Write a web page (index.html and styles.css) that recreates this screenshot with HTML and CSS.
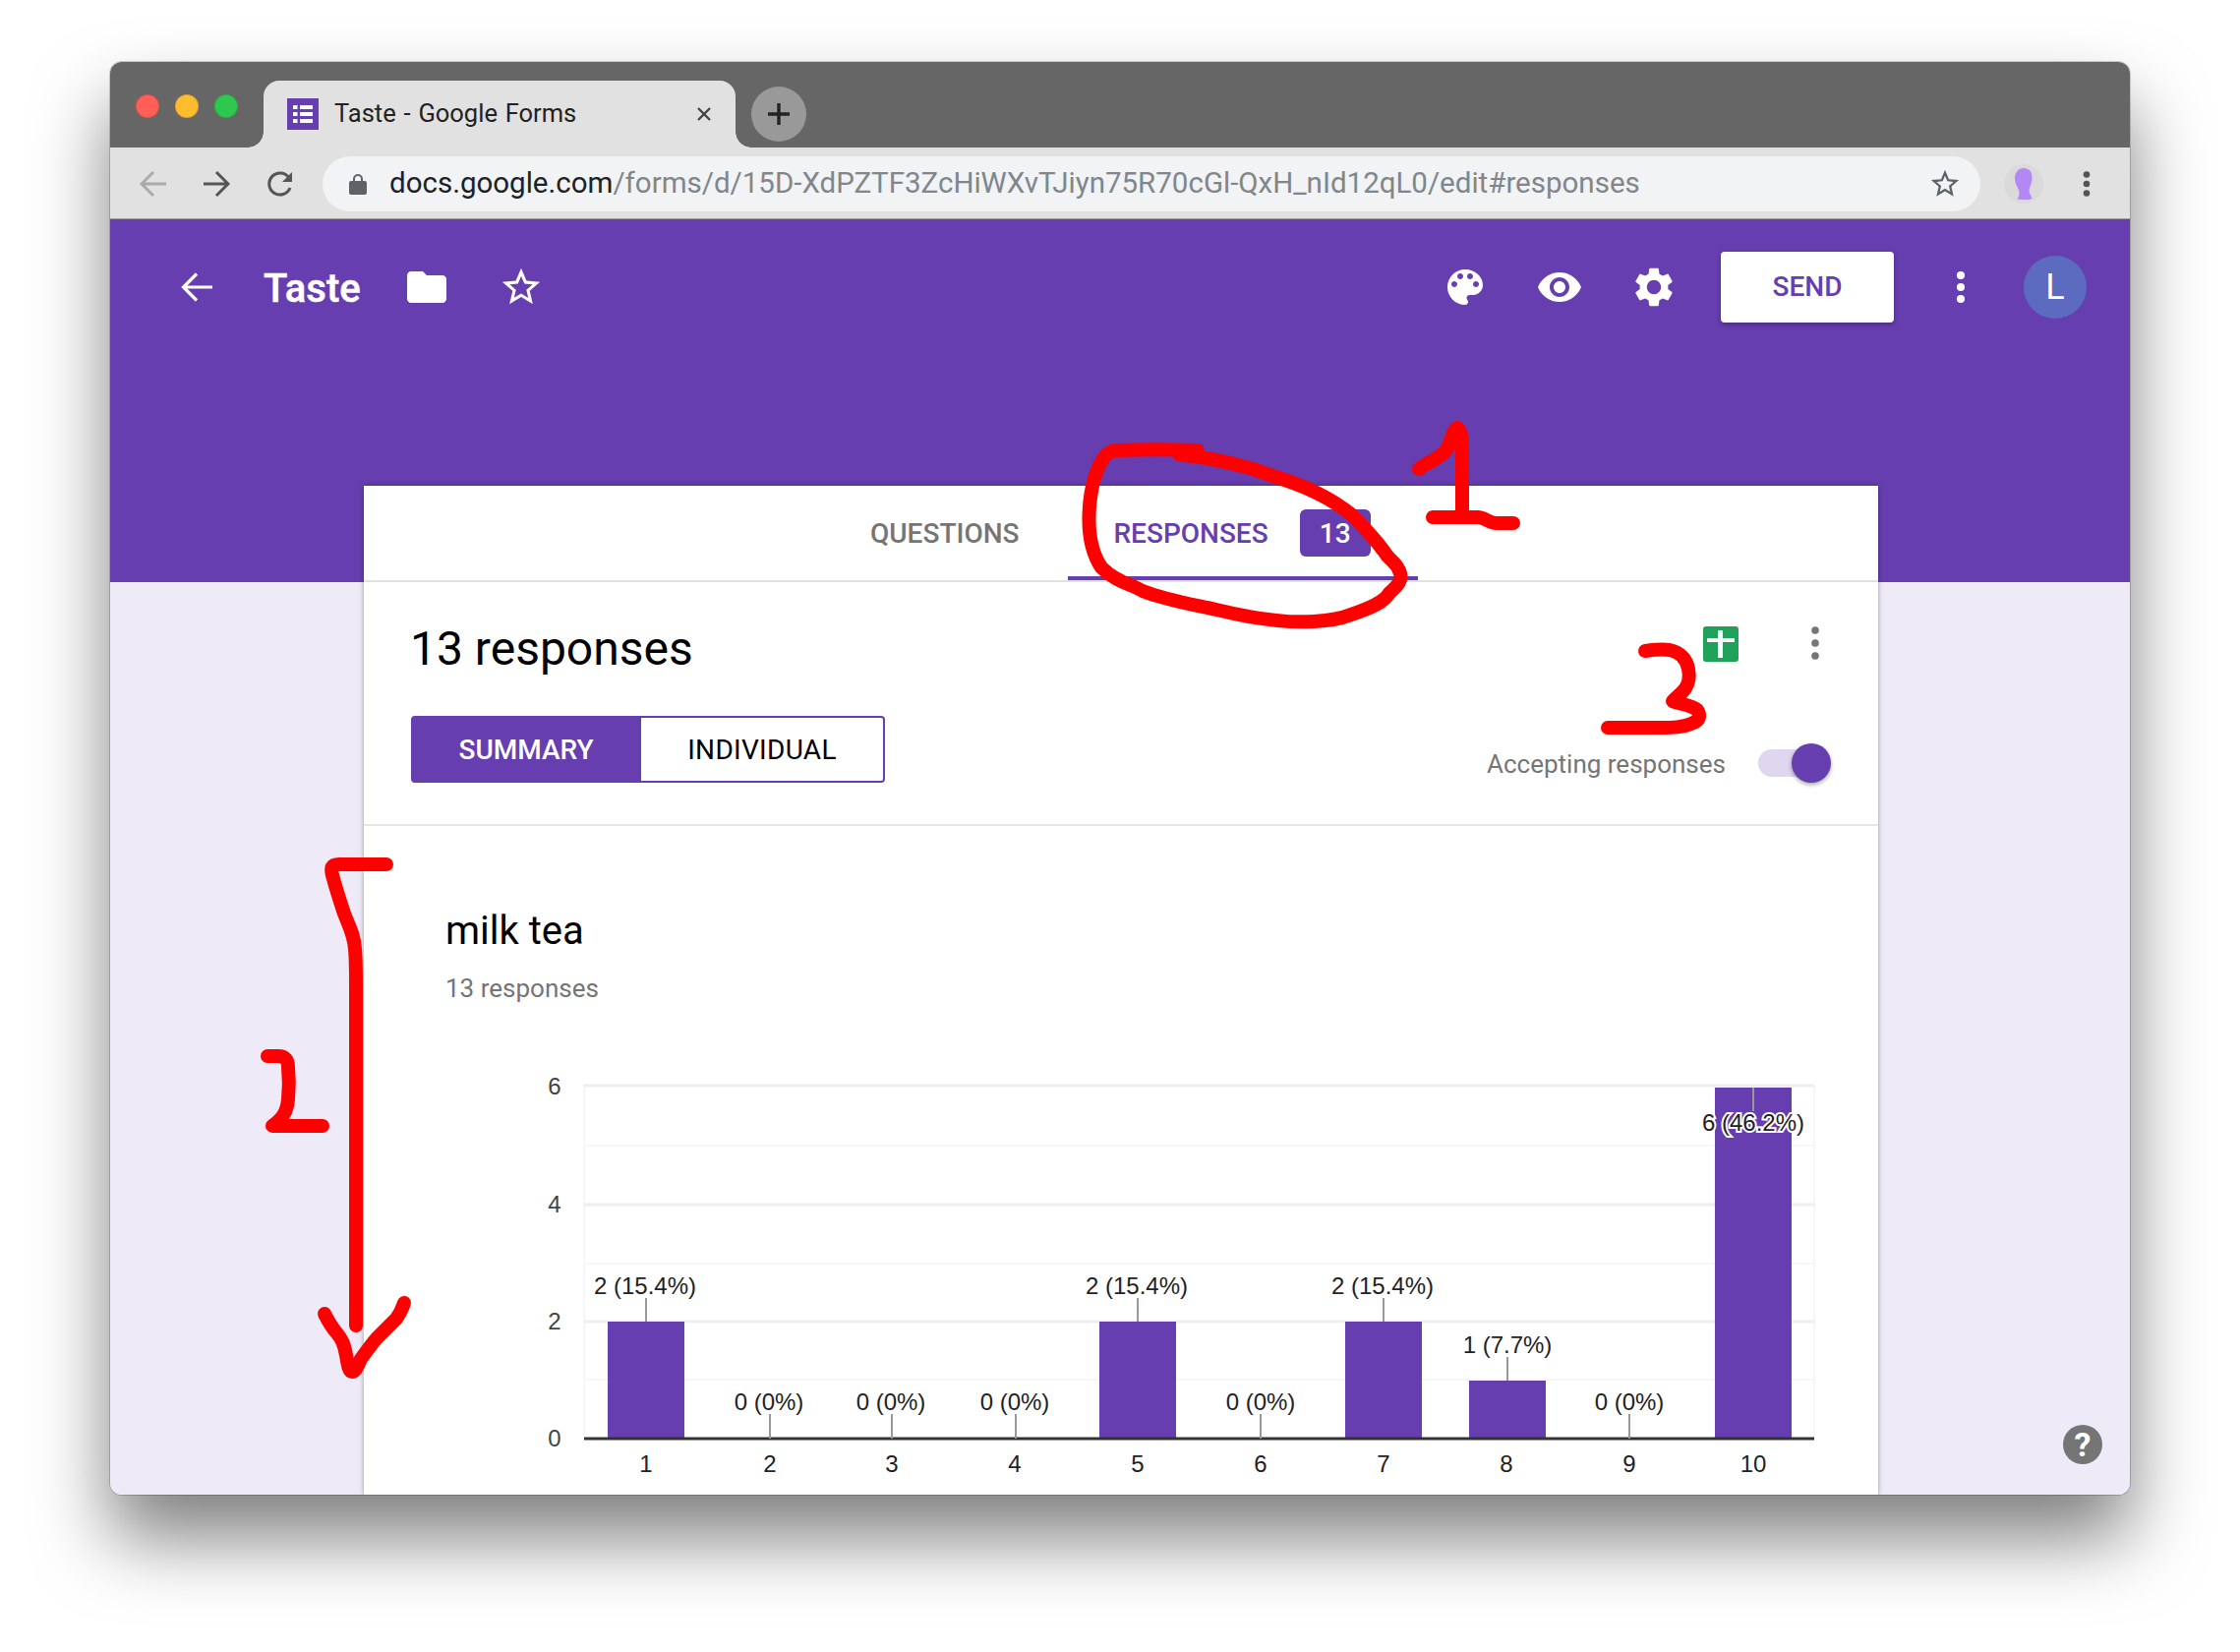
FILE: index.html
```html
<!DOCTYPE html>
<html lang="en">
<head>
<meta charset="utf-8">
<title>Taste - Google Forms</title>
<link rel="stylesheet" href="styles.css">
</head>
<body>
<div class="window">
  <div class="titlebar">
    <div class="lights"><span class="light red"></span><span class="light yellow"></span><span class="light green"></span></div>
    <div class="tab">
      <svg class="tab-icon" viewBox="0 0 32 32"><rect width="32" height="32" fill="#663eaf"/><path d="M6 7h4.500v4H6zM13 7h13v4H13zM6 14h4.500v4H6zM13 14h13v4H13zM6 21h4.500v4H6zM13 21h13v4H13z" fill="#fff"/></svg>
      <span class="tab-title">Taste - Google Forms</span>
      <svg class="tab-close" viewBox="0 0 16 16"><path d="M2 2l12 12M14 2L2 14" stroke="#444" stroke-width="2.4" fill="none"/></svg>
    </div>
    <div class="newtab"><svg viewBox="0 0 24 24" class="newtab-icon"><path d="M12 1v22M1 12h22" stroke="#222" stroke-width="3.4" fill="none"/></svg></div>
  </div>
  <div class="toolbar">
    <svg class="nav" viewBox="0 0 28 28"><path d="M27 14H3M14 2L2 14l12 12" stroke="#aaa" stroke-width="3" fill="none"/></svg>
    <svg class="nav nav-fwd" viewBox="0 0 28 28"><path d="M1 14h24M14 2l12 12-12 12" stroke="#555" stroke-width="3" fill="none"/></svg>
    <svg class="nav nav-reload" viewBox="0 0 28 28"><path d="M23 18a11 11 0 1 1-1-10" stroke="#555" stroke-width="3" fill="none"/><path d="M25 2v10H15z" fill="#555"/></svg>
    <div class="omnibox">
      <svg class="lock" viewBox="0 0 18 22"><path d="M5 9V6a4 4 0 0 1 8 0v3" stroke="#5f6368" stroke-width="2" fill="none"/><rect y="8" width="18" height="14" rx="2" fill="#5f6368"/></svg>
      <span class="url"><span class="url-host">docs.google.com</span>/forms/d/15D-XdPZTF3ZcHiWXvTJiyn75R70cGl-QxH_nId12qL0/edit#responses</span>
      <svg class="omni-star" viewBox="0 0 24 24"><path d="M22 9.24l-7.19-.62L12 2 9.19 8.63 2 9.24l5.46 4.73L5.82 21 12 17.27 18.18 21l-1.63-7.03L22 9.24zM12 15.4l-3.76 2.27 1-4.28-3.32-2.88 4.38-.38L12 6.1l1.71 4.04 4.38.38-3.32 2.88 1 4.28L12 15.4z" fill="#5f6368"/></svg>
    </div>
    <div class="ext"><svg viewBox="0 0 20 32" class="ext-icon"><path d="M10 0c6 0 9 4 8.500 11-.4 5-2.500 8-3 12 0 3 2.500 5 3 8-3 1.500-9 1.500-15 .5 2-3 2.500-6 1.500-9C3 18 1 15 1 10 1 4 5 0 10 0z" fill="#b388f5"/></svg></div>
    <svg class="chrome-more" viewBox="0 0 8 26"><circle cx="4" cy="3.500" r="3.300" fill="#555"/><circle cx="4" cy="13" r="3.300" fill="#555"/><circle cx="4" cy="22.500" r="3.300" fill="#555"/></svg>
  </div>
  <div class="app">
    <header class="appbar">
      <svg class="back" viewBox="0 0 32 30"><path d="M32 15H3M16 1.500L2.500 15 16 28.500" stroke="#fff" stroke-width="3.200" fill="none"/></svg>
      <span class="doc-title">Taste</span>
      <svg class="icon48 folder" viewBox="0 0 24 24"><path d="M10 4H4c-1.100 0-1.990.9-1.990 2L2 18c0 1.100.9 2 2 2h16c1.100 0 2-.9 2-2V8c0-1.100-.9-2-2-2h-8l-2-2z" fill="#fff"/></svg>
      <svg class="icon48 star" viewBox="0 0 24 24"><path d="M22 9.240l-7.190-.62L12 2 9.190 8.630 2 9.240l5.460 4.730L5.820 21 12 17.270 18.180 21l-1.630-7.030L22 9.240zM12 15.400l-3.760 2.270 1-4.280-3.320-2.880 4.380-.38L12 6.100l1.710 4.040 4.380.38-3.320 2.880 1 4.280L12 15.400z" fill="#fff"/></svg>
      <span class="spacer"></span>
      <svg class="icon48" viewBox="0 0 24 24"><path d="M12 3c-4.970 0-9 4.030-9 9s4.030 9 9 9c.83 0 1.500-.67 1.500-1.500 0-.39-.15-.74-.39-1.010-.23-.26-.38-.61-.38-.99 0-.83.67-1.500 1.500-1.500H16c2.760 0 5-2.240 5-5 0-4.420-4.030-8-9-8zm-5.500 9c-.83 0-1.500-.67-1.500-1.500S5.670 9 6.500 9 8 9.670 8 10.500 7.330 12 6.500 12zm3-4C8.670 8 8 7.330 8 6.500S8.670 5 9.500 5s1.500.67 1.500 1.500S10.330 8 9.500 8zm5 0c-.83 0-1.500-.67-1.500-1.500S13.670 5 14.500 5s1.500.67 1.500 1.500S15.330 8 14.500 8zm3 4c-.83 0-1.500-.67-1.500-1.500S16.670 9 17.500 9s1.500.67 1.500 1.500-.67 1.500-1.500 1.500z" fill="#fff"/></svg>
      <svg class="icon48" viewBox="0 0 24 24"><path d="M12 4.500C7 4.500 2.730 7.610 1 12c1.730 4.390 6 7.500 11 7.500s9.270-3.110 11-7.500c-1.730-4.390-6-7.500-11-7.500zM12 17c-2.760 0-5-2.240-5-5s2.240-5 5-5 5 2.240 5 5-2.240 5-5 5zm0-8c-1.660 0-3 1.340-3 3s1.340 3 3 3 3-1.340 3-3-1.340-3-3-3z" fill="#fff"/></svg>
      <svg class="icon48" viewBox="0 0 24 24"><path d="M19.140 12.940c.04-.3.06-.61.06-.94 0-.32-.02-.64-.07-.94l2.030-1.580c.18-.14.23-.41.12-.61l-1.920-3.320c-.12-.22-.37-.29-.59-.22l-2.390.96c-.5-.38-1.030-.7-1.620-.94l-.36-2.540c-.04-.24-.24-.41-.48-.41h-3.840c-.24 0-.43.17-.47.41l-.36 2.540c-.59.24-1.130.57-1.620.94l-2.390-.96c-.22-.08-.47 0-.59.22L2.740 8.870c-.12.21-.08.47.12.61l2.030 1.580c-.05.3-.09.63-.09.94s.02.64.07.94l-2.030 1.580c-.18.14-.23.41-.12.61l1.920 3.320c.12.22.37.29.59.22l2.390-.96c.5.38 1.030.7 1.620.94l.36 2.540c.05.24.24.41.48.41h3.840c.24 0 .44-.17.47-.41l.36-2.540c.59-.24 1.130-.56 1.620-.94l2.390.96c.22.08.47 0 .59-.22l1.920-3.320c.12-.22.07-.47-.12-.61l-2.010-1.580zM12 15.600c-1.980 0-3.600-1.620-3.600-3.600s1.620-3.600 3.600-3.600 3.600 1.620 3.600 3.600-1.620 3.600-3.600 3.600z" fill="#fff"/></svg>
      <button class="send">SEND</button>
      <svg class="app-more" viewBox="0 0 8 32"><circle cx="4" cy="4" r="4" fill="#fff"/><circle cx="4" cy="16" r="4" fill="#fff"/><circle cx="4" cy="28" r="4" fill="#fff"/></svg>
      <div class="avatar">L</div>
    </header>
    <main class="card">
      <nav class="tabs">
        <div class="tabitem">QUESTIONS</div>
        <div class="tabitem active">RESPONSES<span class="badge">13</span></div>
      </nav>
      <section class="summary">
        <div class="summary-left">
          <h1 class="count">13 responses</h1>
          <div class="seg"><div class="seg-btn on">SUMMARY</div><div class="seg-btn">INDIVIDUAL</div></div>
        </div>
        <div class="summary-right">
          <div class="actions">
            <svg class="sheets" viewBox="0 0 36 36"><rect width="36" height="36" rx="3" fill="#1fa15a"/><path d="M4 12h11V4h5v8h12v4H20v16h-5V16H4z" fill="#fff"/></svg>
            <svg class="dots" viewBox="0 0 8 36"><circle cx="4" cy="5" r="3.800" fill="#757575"/><circle cx="4" cy="18" r="3.800" fill="#757575"/><circle cx="4" cy="31" r="3.800" fill="#757575"/></svg>
          </div>
          <div class="accept"><span class="accept-label">Accepting responses</span><div class="toggle"><span class="track"></span><span class="thumb"></span></div></div>
        </div>
      </section>
      <section class="question">
        <h2 class="q-title">milk tea</h2>
        <div class="q-sub">13 responses</div>
        <svg class="chart" viewBox="510 1090 1400 430">
          <g class="grid-light"><path d="M594 1165H1845M594 1285H1845M594 1403H1845M594 1104V1463M1845 1104V1463"/></g>
          <g class="grid"><path d="M594 1104H1845M594 1225H1845M594 1344H1845"/></g>
          <g class="bars">
            <rect x="618" y="1344" width="78" height="119"/>
            <rect x="1118" y="1344" width="78" height="119"/>
            <rect x="1368" y="1344" width="78" height="119"/>
            <rect x="1494" y="1404" width="78" height="59"/>
            <rect x="1744" y="1106" width="78" height="357"/>
          </g>
          <path class="axis" d="M594 1463H1845"/>
          <path class="ticks" d="M657 1320V1344M783 1438V1463M907 1438V1463M1033 1438V1463M1157 1320V1344M1282 1438V1463M1407 1320V1344M1533 1380V1404M1657 1438V1463M1783 1106V1130"/>
          <g class="ylab">
            <text x="564" y="1113">6</text><text x="564" y="1233">4</text><text x="564" y="1352">2</text><text x="564" y="1471">0</text>
          </g>
          <g class="lab">
            <text x="656" y="1316">2 (15.4%)</text>
            <text x="782" y="1434">0 (0%)</text>
            <text x="906" y="1434">0 (0%)</text>
            <text x="1032" y="1434">0 (0%)</text>
            <text x="1156" y="1316">2 (15.4%)</text>
            <text x="1282" y="1434">0 (0%)</text>
            <text x="1406" y="1316">2 (15.4%)</text>
            <text x="1533" y="1376">1 (7.7%)</text>
            <text x="1657" y="1434">0 (0%)</text>
            <text class="halo" x="1783" y="1150">6 (46.2%)</text>
          </g>
          <g class="xlab">
            <text x="657" y="1497">1</text><text x="783" y="1497">2</text><text x="907" y="1497">3</text><text x="1032" y="1497">4</text><text x="1157" y="1497">5</text><text x="1282" y="1497">6</text><text x="1407" y="1497">7</text><text x="1532" y="1497">8</text><text x="1657" y="1497">9</text><text x="1783" y="1497">10</text>
          </g>
        </svg>
      </section>
    </main>
    <div class="help">?</div>
  </div>
</div>
<svg class="ink" viewBox="0 0 2278 1680">
  <path d="M1218 458C1190 457 1160 457 1133 458C1118 462 1110 490 1108 515C1106 540 1110 562 1120 577C1135 592 1150 594 1162 601C1188 611 1215 615 1237 620C1270 628 1305 634 1336 632C1350 631 1362 630 1374 625C1395 618 1408 612 1413 603C1422 595 1426 590 1424 583C1420 570 1414 572 1407 560C1396 545 1388 537 1374 523C1360 512 1348 505 1330 497C1310 488 1295 485 1275 477C1250 470 1225 465 1199 462"/>
  <path d="M1443 477C1448 472 1456 470 1462 465C1468 461 1472 458 1473 453C1476 447 1478 437 1482 435C1486 437 1487 445 1487 453V525M1457 526H1503C1510 526 1514 532 1522 532H1539"/>
  <path d="M1673 662C1680 661 1690 660 1698 661C1708 663 1715 670 1717 680C1719 690 1717 695 1714 700C1710 706 1705 708 1701 713C1708 716 1720 717 1726 722C1730 728 1728 733 1722 735C1712 740 1700 740 1687 740H1635"/>
  <path d="M393 879H345C337 879 336 882 338 890C342 905 346 917 350 929C355 942 360 950 361 965C362 975 362 985 362 1000V1348"/>
  <path d="M330 1336C333 1342 336 1348 342 1355C347 1361 350 1366 352 1378C354 1390 355 1395 358 1395C362 1395 364 1388 367 1382C372 1375 378 1367 383 1361C390 1354 397 1347 403 1341C406 1337 409 1331 411 1325"/>
  <path d="M272 1074H283C290 1074 293 1078 293 1085C294 1095 294 1108 293 1118C292 1130 288 1137 277 1145H328"/>
</svg>
</body>
</html>
```

FILE: styles.css
```css
* { box-sizing: border-box; }
html, body { margin: 0; padding: 0; }
body {
  position: relative;
  width: 2278px;
  height: 1680px;
  overflow: hidden;
  background: #fff;
  font-family: Roboto, "Liberation Sans", sans-serif;
  padding: 63px 112px 0;
}
.window {
  width: 2054px;
  height: 1457px;
  border-radius: 12px;
  overflow: hidden;
  display: flex;
  flex-direction: column;
  box-shadow: 0 0 0 1px rgba(0,0,0,.18), 0 44px 76px rgba(0,0,0,.5);
}
.titlebar {
  height: 87px;
  flex: none;
  background: #666;
  display: flex;
  align-items: flex-end;
}
.lights { display: flex; gap: 16px; width: 156px; padding: 0 0 30px 26px; align-self: flex-end; }
.light { width: 24px; height: 24px; border-radius: 50%; border: 1px solid rgba(0,0,0,.12); }
.red { background: #ff5f57; }
.yellow { background: #febc2e; }
.green { background: #2dc84d; }
.tab {
  position: relative;
  width: 480px;
  height: 68px;
  background: #e1e1e1;
  border-radius: 16px 16px 0 0;
  display: flex;
  align-items: center;
  padding: 0 24px;
}
.tab::before, .tab::after {
  content: "";
  position: absolute;
  bottom: 0;
  width: 16px;
  height: 16px;
  background: #e1e1e1;
}
.tab::before { left: -16px; background: radial-gradient(circle at 0 0, #666 15.5px, #e1e1e1 16px); }
.tab::after { right: -16px; background: radial-gradient(circle at 100% 0, #666 15.5px, #e1e1e1 16px); }
.tab-icon { width: 32px; height: 32px; flex: none; }
.tab-title {
  margin-left: 16px;
  font: 25.500px/1 Roboto, sans-serif;
  word-spacing: 1.500px;
  color: #222;
  flex: 1;
  white-space: nowrap;
}
.tab-close { width: 16px; height: 16px; flex: none; }
.newtab {
  width: 56px;
  height: 56px;
  border-radius: 50%;
  background: #999;
  margin: 0 0 6px 16px;
  display: flex;
  align-items: center;
  justify-content: center;
}
.newtab-icon { width: 24px; height: 24px; }
.toolbar {
  height: 73px;
  flex: none;
  background: #e1e1e1;
  border-bottom: 1px solid #9a9a9a;
  display: flex;
  align-items: center;
  padding-top: 1px;
}
.nav { width: 28px; height: 28px; flex: none; margin-left: 30px; }
.nav-fwd { margin-left: 36px; }
.nav-reload { margin-left: 38px; }
.omnibox {
  width: 1686px;
  height: 56px;
  margin-left: 28px;
  border-radius: 28px;
  background: #f1f3f4;
  display: flex;
  align-items: center;
  padding: 0 38px 0 27px;
}
.lock { width: 18px; height: 22px; flex: none; }
.url {
  margin-left: 23px;
  flex: 1;
  font: 29.500px/1 Roboto, sans-serif;
  color: #80868b;
  white-space: nowrap;
}
.url-host { color: #202124; }
.omni-star { width: 34px; height: 34px; flex: none; margin-right: -19px; }
.ext {
  width: 40px;
  height: 40px;
  border-radius: 50%;
  background: #dadada;
  margin-left: 24px;
  display: flex;
  align-items: center;
  justify-content: center;
}
.ext-icon { width: 20px; height: 32px; }
.chrome-more { width: 8px; height: 26px; margin-left: 40px; }
.app {
  position: relative;
  flex: 1;
  min-height: 0;
  overflow: hidden;
  background: linear-gradient(#663eaf 369px, #eeeaf8 369px);
  display: flex;
  flex-direction: column;
}
.appbar {
  flex: none;
  height: 72px;
  margin-top: 33px;
  padding: 0 0 0 72px;
  display: flex;
  align-items: center;
}
.back { width: 32px; height: 30px; flex: none; }
.doc-title {
  margin-left: 52px;
  padding-top: 2px;
  font-size: 40px;
  font-weight: 500;
  color: #fff;
  -webkit-text-stroke: .5px #fff;
}
.icon48 { width: 48px; height: 48px; flex: none; margin-right: 48px; }
.folder { margin-left: 43px; margin-right: 49px; }
.star { margin-right: 0; width: 46px; height: 46px; }
.spacer { flex: 1; }
.send {
  width: 176px;
  height: 72px;
  border: 0;
  border-radius: 4px;
  background: #fff;
  color: #663eaf;
  font: 500 28px/1 Roboto, sans-serif;
  box-shadow: 0 2px 5px rgba(0,0,0,.3);
  margin-left: -4px;
}
.app-more { width: 8px; height: 32px; margin-left: 64px; flex: none; }
.avatar {
  width: 64px;
  height: 64px;
  border-radius: 50%;
  background: #5c6bc0;
  color: #fff;
  font-size: 36px;
  display: flex;
  align-items: center;
  justify-content: center;
  margin-left: 60px;
  margin-right: 44px;
  flex: none;
}
.card {
  margin-top: 166px;
  margin-left: 258px;
  width: 1540px;
  flex: 1;
  background: #fff;
  box-shadow: 0 0 5px rgba(0,0,0,.35);
}
.tabs {
  height: 98px;
  border-bottom: 2px solid #e0e0e0;
  display: flex;
  padding-left: 514px;
  align-items: stretch;
}
.tabitem {
  display: flex;
  align-items: center;
  font-size: 28px;
  font-weight: 500;
  color: #757575;
  padding: 0 32px 0 1px;
  margin-right: 18px;
  white-space: nowrap;
}
.tabitem.active {
  color: #663eaf;
  border-bottom: 4px solid #663eaf;
  margin-right: 0;
  padding: 4px 48px 0 46px;
}
.badge {
  width: 72px;
  height: 48px;
  margin-left: 32px;
  border-radius: 6px;
  background: #663eaf;
  color: #fff;
  display: flex;
  align-items: center;
  justify-content: center;
}
.summary {
  height: 248px;
  border-bottom: 2px solid #e6e6e6;
  padding: 44px 48px 0;
  display: flex;
  justify-content: space-between;
}
.count {
  margin: 0 0 44px -1px;
  font-size: 48px;
  line-height: 48px;
  font-weight: 400;
  color: #000;
}
.seg {
  width: 482px;
  height: 68px;
  display: flex;
  border: 2px solid #663eaf;
  border-radius: 4px;
}
.seg-btn {
  flex: 1;
  display: flex;
  align-items: center;
  justify-content: center;
  font-size: 28px;
  letter-spacing: .3px;
  color: #000;
}
.seg-btn.on { flex: none; width: 230px; margin-right: 2px; background: #663eaf; color: #fff; font-weight: 500; letter-spacing: 0; box-shadow: 2px 0 0 #663eaf; }
.summary-right { display: flex; flex-direction: column; align-items: flex-end; }
.actions { display: flex; align-items: center; gap: 74px; padding: 0 12px 0 0; height: 36px; }
.sheets { width: 36px; height: 36px; margin-top: 2px; }
.dots { width: 8px; height: 36px; }
.accept { display: flex; align-items: center; gap: 33px; margin-top: 84px; }
.accept-label { font-size: 26px; color: #757575; padding-top: 1px; }
.toggle { position: relative; width: 74px; height: 40px; }
.track { position: absolute; left: 0; right: 6px; top: 6px; height: 28px; border-radius: 14px; background: #dfd6ef; }
.thumb { position: absolute; right: 0; top: 0; width: 40px; height: 40px; border-radius: 50%; background: #663eaf; box-shadow: 0 2px 4px rgba(0,0,0,.35); }
.question { padding: 83px 0 0 83px; }
.q-title { margin: 0 0 16px; font-size: 40px; line-height: 48px; font-weight: 400; color: #000; }
.q-sub { font-size: 26px; line-height: 36px; color: #757575; }
.chart { display: block; width: 1400px; height: 430px; margin: 67px 0 0 57px; }
.grid path { stroke: #eee; stroke-width: 3; fill: none; }
.grid-light path { stroke: #f6f6f6; stroke-width: 2; fill: none; }
.bars rect { fill: #663eaf; }
.axis { stroke: #333; stroke-width: 3; fill: none; }
.ticks { stroke: #999; stroke-width: 2; fill: none; }
.chart text { font-family: "Liberation Sans", Arial, sans-serif; font-size: 24px; text-anchor: middle; }
.ylab text { fill: #444; }
.lab text, .xlab text { fill: #222; }
.lab .halo { stroke: #fff; stroke-width: 4px; paint-order: stroke; }
.help {
  position: absolute;
  left: 1986px;
  top: 1226px;
  width: 40px;
  height: 40px;
  border-radius: 50%;
  background: #757575;
  color: #fff;
  font-size: 34px;
  font-weight: 700;
  display: flex;
  align-items: center;
  justify-content: center;
}
.ink {
  position: absolute;
  left: 0;
  top: 0;
  width: 2278px;
  height: 1680px;
  pointer-events: none;
}
.ink path { fill: none; stroke: #fe0000; stroke-width: 14; stroke-linecap: round; stroke-linejoin: round; }
```
